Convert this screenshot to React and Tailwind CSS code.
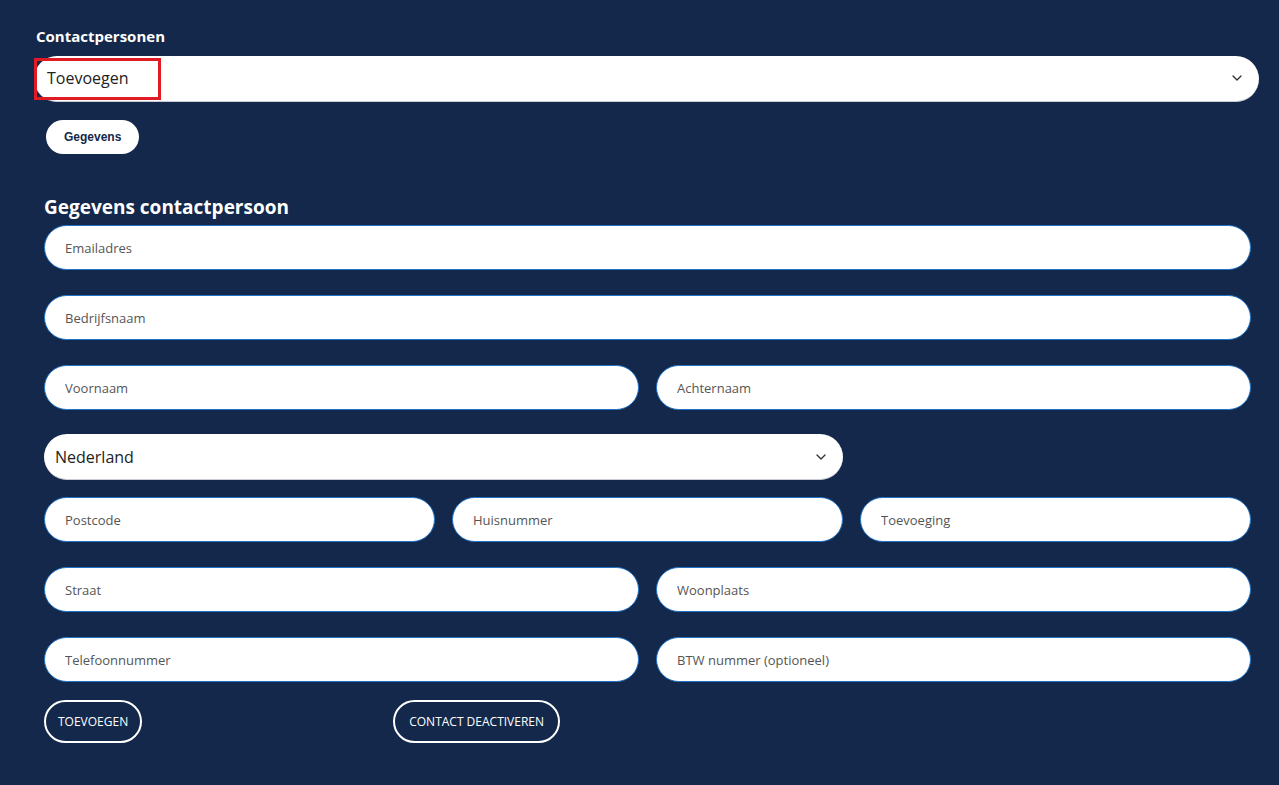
import React from "react";
import { ChevronDown } from "lucide-react";

const font = { fontFamily: '"Open Sans", "Noto Sans", sans-serif' };

function Field({ placeholder }) {
  return (
    <input
      placeholder={placeholder}
      className="h-[45px] w-full rounded-full border border-[#1f74c9] bg-white px-5 text-[13px] text-[#333] placeholder:text-[#555] outline-none"
    />
  );
}

function Select({ value, className = "", textClass = "" }) {
  return (
    <div className={"flex h-[46px] items-center justify-between rounded-full bg-white border-b border-[#c9ccd4] " + className}>
      <span className={"text-[16px] text-[#222] " + textClass}>{value}</span>
      <ChevronDown size={16} strokeWidth={2} className="text-[#333] mr-[14px]" />
    </div>
  );
}

export default function App() {
  return (
    <div
      className="min-h-[785px] bg-[#13284a] pt-[25px] pl-[34px] pr-[20px] pb-10"
      style={font}
    >
      {/* Contactpersonen */}
      <p className="text-[15px] font-bold text-white ml-[2px] mb-[8px]">Contactpersonen</p>
      <div className="relative">
        <Select value="Toevoegen" className="pl-[13px]" />
        <div className="absolute left-0 top-[2px] h-[42px] w-[127px] border-[3px] border-[#e01b24]" />
      </div>
      <button
        className="mt-[18px] ml-[12px] h-[34px] rounded-full bg-white px-[18px] text-[12px] font-bold text-[#13284a]"
        style={{ fontFamily: '"Liberation Sans", Arial, sans-serif' }}
      >
        Gegevens
      </button>

      {/* Formulier */}
      <div className="ml-[10px] mr-[8px] mt-[39px]">
        <h2 className="text-[19px] font-bold text-white mb-[4px]">Gegevens contactpersoon</h2>
        <div className="flex flex-col gap-[25px]">
          <Field placeholder="Emailadres" />
          <Field placeholder="Bedrijfsnaam" />
          <div className="grid grid-cols-2 gap-[17px]">
            <Field placeholder="Voornaam" />
            <Field placeholder="Achternaam" />
          </div>
        </div>
        <div className="grid grid-cols-3 gap-x-[17px] mt-[24px]">
          <Select value="Nederland" className="col-span-2 pl-[11px]" textClass="text-[#111]" />
        </div>
        <div className="flex flex-col gap-[25px] mt-[17px]">
          <div className="grid grid-cols-3 gap-[17px]">
            <Field placeholder="Postcode" />
            <Field placeholder="Huisnummer" />
            <Field placeholder="Toevoeging" />
          </div>
          <div className="grid grid-cols-2 gap-[17px]">
            <Field placeholder="Straat" />
            <Field placeholder="Woonplaats" />
          </div>
          <div className="grid grid-cols-2 gap-[17px]">
            <Field placeholder="Telefoonnummer" />
            <Field placeholder="BTW nummer (optioneel)" />
          </div>
        </div>
        <div className="flex items-center mt-[18px]">
          <button className="h-[43px] rounded-full border-2 border-white px-[12px] text-[12px] text-white">
            TOEVOEGEN
          </button>
          <button className="ml-[251px] h-[43px] rounded-full border-2 border-white px-[14px] text-[12px] text-white">
            CONTACT DEACTIVEREN
          </button>
        </div>
      </div>
    </div>
  );
}
